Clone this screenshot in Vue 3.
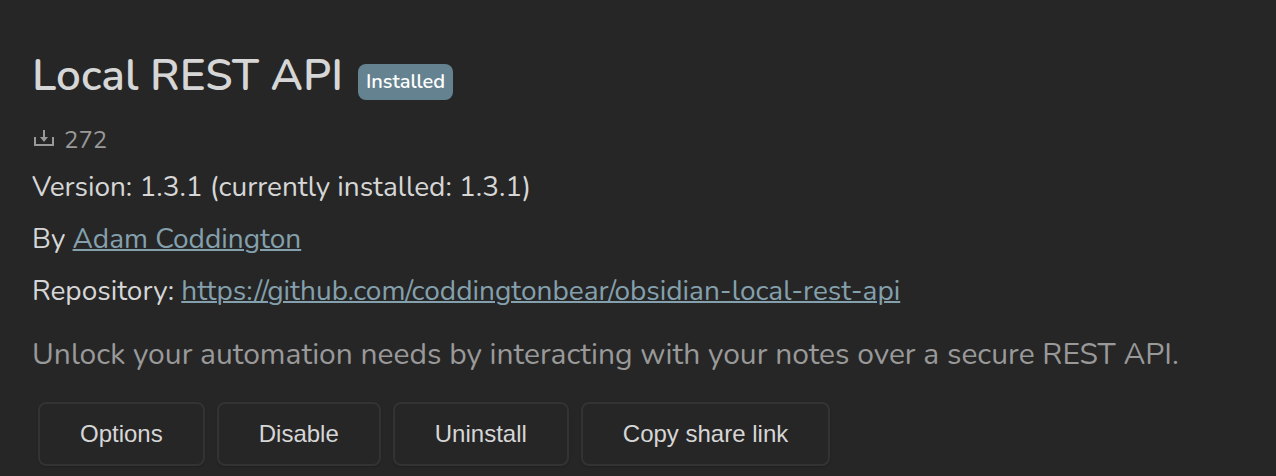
<script setup>
const actions = ['Options', 'Disable', 'Uninstall', 'Copy share link']
const repo = 'https://github.com/coddingtonbear/obsidian-local-rest-api'
</script>

<template>
  <main class="plugin">
    <header class="heading">
      <h1 class="name">Local REST API</h1>
      <span class="flair">Installed</span>
    </header>
    <div class="downloads">
      <svg class="icon" viewBox="0 0 22 20" aria-hidden="true">
        <path class="tray" d="M3 7V15H21V7" />
        <path class="arrow" d="M11 0H13V7H16L12 12L8 7H11Z" />
      </svg>
      <span>272</span>
    </div>
    <p class="line">Version: 1.3.1 (currently installed: 1.3.1)</p>
    <p class="line">By <a href="#">Adam Coddington</a></p>
    <p class="line">Repository: <a :href="repo">{{ repo }}</a></p>
    <p class="description">Unlock your automation needs by interacting with your notes over a secure REST API.</p>
    <div class="actions">
      <button v-for="action in actions" :key="action" type="button">{{ action }}</button>
    </div>
  </main>
</template>

<style>
body {
  background: #262626;
}
</style>

<style scoped>
.plugin {
  padding: 48px 32px 10px;
  font-family: "Nunito", "Open Sans", "Noto Sans", sans-serif;
  font-size: 28px;
  color: #d6d6d6;
}
.heading {
  display: flex;
  align-items: center;
  gap: 15px;
}
.name {
  margin: 0;
  font-size: 44px;
  line-height: 56px;
  font-weight: 600;
}
.flair {
  margin-top: 12px;
  padding: 0 8px;
  border-radius: 8px;
  background: #658290;
  color: #fff;
  font-size: 20px;
  line-height: 36px;
  font-weight: 600;
}
.downloads {
  display: flex;
  align-items: center;
  gap: 10px;
  margin-top: 18px;
  font-size: 24px;
  line-height: 36px;
  color: #999;
}
.icon {
  width: 22px;
  height: 20px;
}
.tray {
  fill: none;
  stroke: currentColor;
  stroke-width: 2;
}
.arrow {
  fill: currentColor;
}
.line {
  margin: 0 0 12px;
  line-height: 40px;
}
.downloads + .line {
  margin-top: 9px;
}
a {
  color: #84a0ad;
  text-decoration: underline;
  text-decoration-thickness: 2px;
}
.description {
  margin: 20px 0 23px;
  font-size: 30px;
  line-height: 48px;
  color: #999;
}
.actions {
  display: flex;
  flex-wrap: wrap;
  gap: 12px;
  padding-left: 6px;
}
button {
  height: 64px;
  padding: 0 40px;
  border: 2px solid #333;
  border-radius: 8px;
  background: #262626;
  box-shadow: 0 1px 2px rgba(0, 0, 0, 0.2);
  color: #d6d6d6;
  font-family: "Liberation Sans", Arial, sans-serif;
  font-size: 24px;
}
</style>
